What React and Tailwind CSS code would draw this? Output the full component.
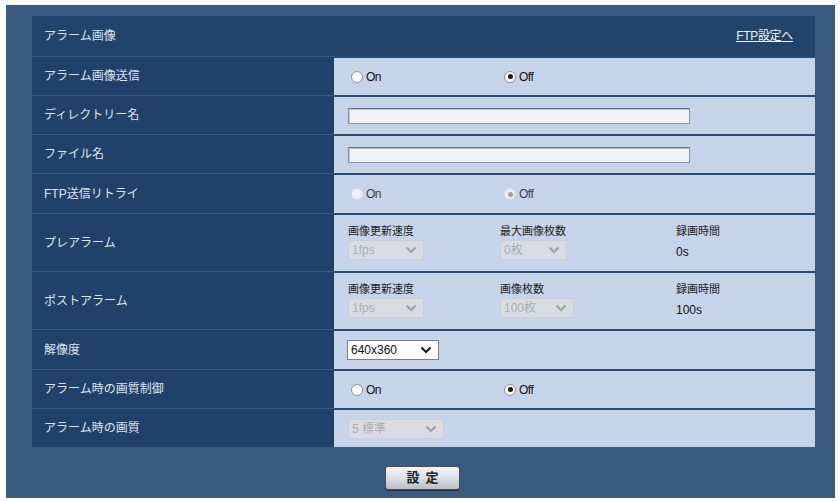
import React from 'react'

const font = { fontFamily: '"Liberation Sans", "Noto Sans CJK JP", sans-serif' }

function Radio({ checked, disabled }) {
  return (
    <span
      className={`inline-flex items-center justify-center w-[12px] h-[12px] rounded-full border ${
        disabled ? 'border-[#d6dbe3] bg-[#eef0f3]' : 'border-[#8a9099] bg-white'
      }`}
    >
      {checked && (
        <span className={`w-[5px] h-[5px] rounded-full ${disabled ? 'bg-[#9aa0a8]' : 'bg-[#111]'}`} />
      )}
    </span>
  )
}

function RadioPair({ value = 'off', disabled }) {
  const txt = disabled ? 'text-[#3a3f46]' : 'text-[#111]'
  return (
    <div className="flex items-center text-[12px] pl-[17px]">
      <label className="flex items-center gap-[3px] w-[153px]">
        <Radio checked={value === 'on'} disabled={disabled} />
        <span className={`${txt} tracking-[-0.5px]`}>On</span>
      </label>
      <label className="flex items-center gap-[3px]">
        <Radio checked={value === 'off'} disabled={disabled} />
        <span className={`${txt} tracking-[-0.5px]`}>Off</span>
      </label>
    </div>
  )
}

function Chevron({ color = '#1a1a1a' }) {
  return (
    <svg width="12" height="8" viewBox="0 0 12 8">
      <path d="M1.5 1.5 L6 6 L10.5 1.5" fill="none" stroke={color} strokeWidth="2.2" />
    </svg>
  )
}

function Select({ value, width, disabled }) {
  return (
    <div
      style={{ width }}
      className={`h-[20px] flex items-center justify-between pl-[3px] pr-[6px] text-[12px] border ${
        disabled
          ? 'bg-[#d9dde3] border-[#c9ced6] text-[#a7adb5]'
          : 'bg-white border-[#7a7f87] text-[#111]'
      }`}
    >
      <span>{value}</span>
      <Chevron color={disabled ? '#9ea4ac' : '#1a1a1a'} />
    </div>
  )
}

function TextBox() {
  return (
    <div className="w-[342px] h-[16px] bg-[#f3f4f6] border border-[#8d949c] border-t-[#6c737c] shadow-[inset_1px_1px_0_#b9bfc6]" />
  )
}

function Row({ label, h, children }) {
  return (
    <div className="flex" style={{ height: h }}>
      <div className="w-[302px] shrink-0 bg-[#21416a] border-t border-[#3a5a80] flex items-center pl-[12px] text-[12px] text-[#dfe5ee]">
        {label}
      </div>
      <div className="flex-1 bg-[#c6d4ea] border-t-2 border-[#2b4a72] flex items-center">{children}</div>
    </div>
  )
}

function Alarm({ second, count, countW, dur }) {
  return (
    <div className="flex w-full pl-[14px] text-[11px] text-[#222]">
      <div className="w-[152px]">
        <div className="leading-[13px] mb-[2px]">画像更新速度</div>
        <Select value="1fps" width={76} disabled />
      </div>
      <div className="w-[176px]">
        <div className="leading-[13px] mb-[2px]">{second}</div>
        <Select value={count} width={countW} disabled />
      </div>
      <div>
        <div className="leading-[13px] mb-[5px]">録画時間</div>
        <div className="text-[12px] text-[#111]">{dur}</div>
      </div>
    </div>
  )
}

export default function App() {
  return (
    <div className="w-[840px] h-[501px] bg-white pt-[5px] pl-[6px] pr-[5px] pb-[3px]" style={font}>
      <div className="w-full h-full bg-[#3b5a7f] pt-[11px] px-[26px] flex flex-col">
        <div className="w-[783px] h-[40px] bg-[#22436b] flex items-center justify-between pl-[12px] pr-[22px] text-[12px] text-[#dfe5ee]">
          <span>アラーム画像</span>
          <a className="underline text-[#f0f3f8] tracking-[-0.3px]">FTP設定へ</a>
        </div>
        <div className="w-[783px] flex flex-col">
          <Row label="アラーム画像送信" h={39}>
            <RadioPair value="off" />
          </Row>
          <Row label="ディレクトリー名" h={39}>
            <div className="pl-[14px]"><TextBox /></div>
          </Row>
          <Row label="ファイル名" h={39}>
            <div className="pl-[14px]"><TextBox /></div>
          </Row>
          <Row label="FTP送信リトライ" h={40}>
            <RadioPair value="off" disabled />
          </Row>
          <Row label="プレアラーム" h={58}>
            <Alarm second="最大画像枚数" count="0枚" countW={67} dur="0s" />
          </Row>
          <Row label="ポストアラーム" h={58}>
            <Alarm second="画像枚数" count="100枚" countW={74} dur="100s" />
          </Row>
          <Row label="解像度" h={40}>
            <div className="pl-[13px]">
              <Select value="640x360" width={92} />
            </div>
          </Row>
          <Row label="アラーム時の画質制御" h={39}>
            <RadioPair value="off" />
          </Row>
          <Row label="アラーム時の画質" h={39}>
            <div className="pl-[14px]">
              <Select value="5 標準" width={96} disabled />
            </div>
          </Row>
        </div>
        <div className="flex justify-center mt-[19px] pl-[4px]">
          <button className="w-[75px] h-[24px] rounded-[3px] border border-[#4a4f57] bg-gradient-to-b from-[#f4f5f7] via-[#dcdfe4] to-[#b9bec6] text-[13px] font-bold text-[#222] tracking-[6px] pl-[6px] shadow-[0_1px_0_#1f2f45]">
            設定
          </button>
        </div>
      </div>
    </div>
  )
}
